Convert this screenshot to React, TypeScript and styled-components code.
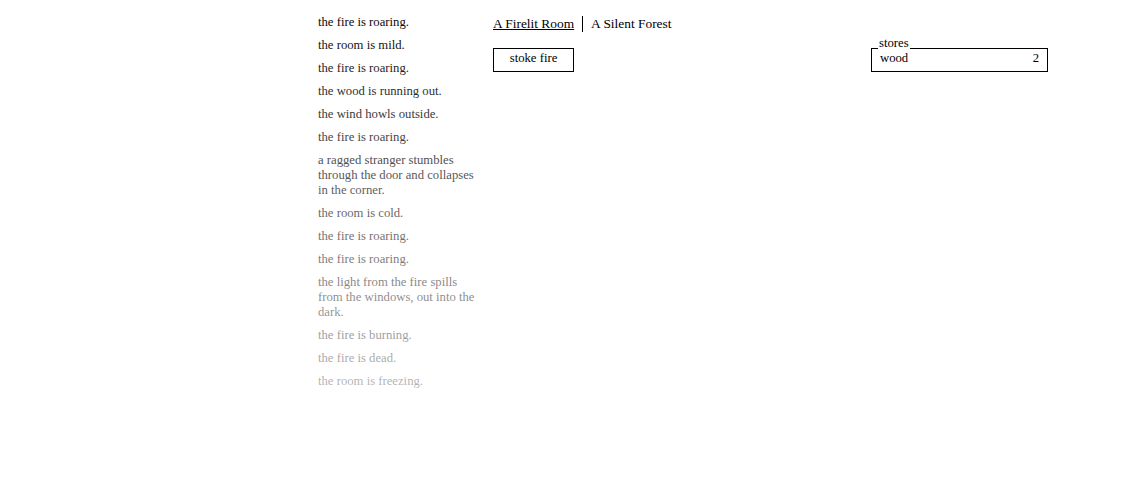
import React from "react";
import styled, { createGlobalStyle } from "styled-components";

const Global = createGlobalStyle`
  html, body { margin: 0; padding: 0; background: #fff; }
  body {
    font-family: "Liberation Serif", "Times New Roman", serif;
    font-size: 13px;
    color: #000;
  }
`;

const Page = styled.div`
  display: flex;
  align-items: flex-start;
  padding: 15px 0 0 318px;
`;

const Notifications = styled.div`
  position: relative;
  width: 160px;
  margin-right: 15px;
  font-size: 12.7px;
`;

const Notice = styled.div`
  line-height: 15px;
  margin-bottom: 8px;
`;

const Fade = styled.div`
  position: absolute;
  inset: -15px 0 0 0;
  background: linear-gradient(
    rgba(255, 255, 255, 0) 0%,
    rgba(255, 255, 255, 0.72) 100%
  );
  pointer-events: none;
`;

const Content = styled.div`
  width: 555px;
  display: flex;
  justify-content: space-between;
  align-items: flex-start;
`;

const Main = styled.div`
  display: flex;
  flex-direction: column;
`;

const Header = styled.div`
  display: flex;
  padding-top: 1px;
  font-size: 13.4px;
`;

const HeaderTab = styled.div<{ $active?: boolean; $last?: boolean }>`
  line-height: 16px;
  padding: 0 8px;
  cursor: pointer;
  text-decoration: ${(p) => (p.$active ? "underline" : "none")};
  border-right: ${(p) => (p.$last ? "none" : "1px solid #000")};
  &:first-child {
    padding-left: 0;
  }
`;

const Button = styled.div`
  margin-top: 16px;
  width: 79px;
  height: 19px;
  padding-bottom: 3px;
  border: 1px solid #000;
  box-sizing: content-box;
  text-align: center;
  line-height: 19px;
  font-size: 12.7px;
  cursor: pointer;
`;

const Stores = styled.div`
  position: relative;
  margin-top: 33px;
  width: 159px;
  padding: 2px 8px 5px 8px;
  border: 1px solid #000;
  font-size: 12.7px;
`;

const Legend = styled.div`
  position: absolute;
  top: -12px;
  left: 6px;
  background: #fff;
  line-height: 13px;
  padding: 0 1px;
`;

const StoreRow = styled.div`
  display: flex;
  justify-content: space-between;
  line-height: 15px;
`;

const notices = [
  "the fire is roaring.",
  "the room is mild.",
  "the fire is roaring.",
  "the wood is running out.",
  "the wind howls outside.",
  "the fire is roaring.",
  "a ragged stranger stumbles through the door and collapses in the corner.",
  "the room is cold.",
  "the fire is roaring.",
  "the fire is roaring.",
  "the light from the fire spills from the windows, out into the dark.",
  "the fire is burning.",
  "the fire is dead.",
  "the room is freezing.",
];

export default function App() {
  return (
    <>
      <Global />
      <Page>
        <Notifications>
          {notices.map((n, i) => (
            <Notice key={i}>{n}</Notice>
          ))}
          <Fade />
        </Notifications>
        <Content>
          <Main>
            <Header>
              <HeaderTab $active>A Firelit Room</HeaderTab>
              <HeaderTab $last>A Silent Forest</HeaderTab>
            </Header>
            <Button>stoke fire</Button>
          </Main>
          <Stores>
            <Legend>stores</Legend>
            <StoreRow>
              <span>wood</span>
              <span>2</span>
            </StoreRow>
          </Stores>
        </Content>
      </Page>
    </>
  );
}
